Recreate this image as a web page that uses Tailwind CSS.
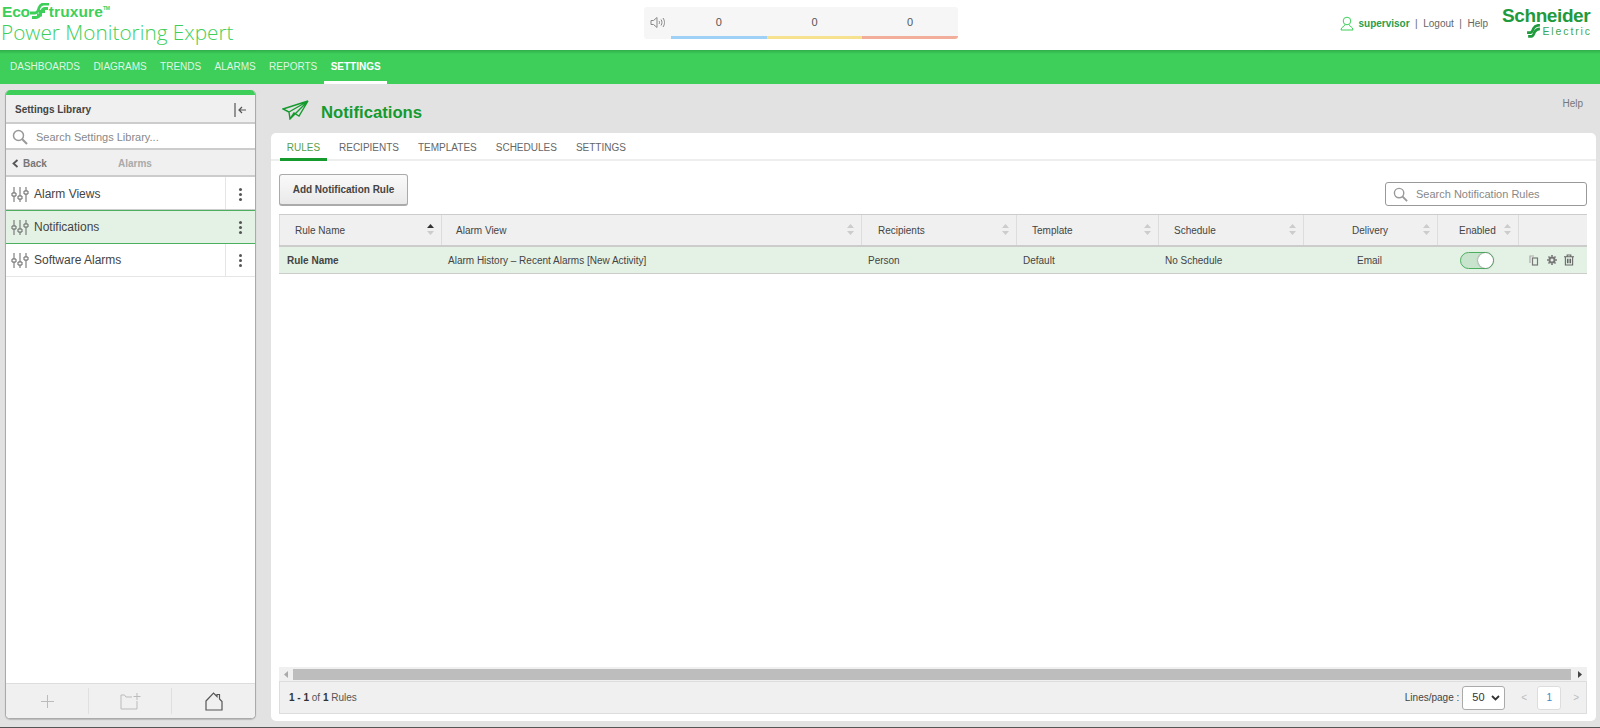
<!DOCTYPE html>
<html lang="en">
<head>
  <meta charset="UTF-8">
  <title>Power Monitoring Expert - Notifications</title>
  <script src="https://cdn.jsdelivr.net/npm/@tailwindcss/browser@4"></script>
</head>
<body class="bg-[#e2e2e2] h-[728px] w-[1600px] overflow-hidden flex flex-col font-['Liberation_Sans',Arial,sans-serif] text-[10px] text-[#444]">

  <!-- top bar -->
  <header class="h-[50px] shrink-0 bg-white grid grid-cols-[644px_314px_1fr]">
    <div class="pl-[2px] pt-[2px]">
      <div class="flex items-center h-[20px] text-[#3ecf5a] text-[15.500px] font-bold leading-none tracking-[-0.2px]">
        <span>Eco</span>
        <svg class="w-[21px] h-[18px] -mr-[2px]" viewBox="0 0 21 18" fill="none" stroke="#3ecf5a" stroke-width="2.800"><path d="M0 10h5c3 0 3-2 4-5s3-4 5-4h5"/><path d="M2 14.500h4c3 0 4-2 5-5s2-4 4-4h3"/><path d="M9 8.500h6M7 12h5"/></svg>
        <span class="tracking-[0.1px]">truxure</span><span class="text-[5px] self-start mt-[4px]">TM</span>
      </div>
      <div class="-ml-[1px] text-[#3ecf5a] text-[20.800px] leading-[21px] font-['Open_Sans',sans-serif] font-[350] whitespace-nowrap">Power Monitoring Expert</div>
    </div>

    <div class="mt-[7px] h-[32px] bg-[#f6f6f6] rounded-[3px] flex">
      <div class="w-[27px] flex items-center justify-center pb-[2px]">
        <svg class="w-[15px] h-[13px]" viewBox="0 0 15 13" fill="none" stroke="#888" stroke-width="1"><path d="M1 4.500h2.500L7 1.500v10L3.500 8.500H1z"/><path d="M9 5c.7 1 .7 2 0 3M11 3.500c1.300 2 1.300 4 0 6M13 2c2 3 2 6 0 9"/></svg>
      </div>
      <div class="flex-1 grid grid-cols-3 text-center text-[11px] text-[#555]">
        <div class="border-b-[3px] border-[#9fd0f5] pt-[7px]">0</div>
        <div class="border-b-[3px] border-[#f6e28e] pt-[7px]">0</div>
        <div class="border-b-[3px] border-[#f2ae9a] pt-[7px] rounded-br-[3px]">0</div>
      </div>
    </div>

    <div class="flex justify-end items-start pr-[8px]">
      <div class="flex items-center mt-[16px] gap-[5.500px] text-[#666]">
        <svg class="w-[14px] h-[15px] -mr-[1px]" viewBox="0 0 14 15" fill="none" stroke="#3ecf5a" stroke-width="1"><circle cx="7" cy="5" r="3.800"/><path d="M5 8.500c0 2-4 2-4 5.500h12c0-3.500-4-3.500-4-5.500"/></svg>
        <span class="font-bold text-[#2a9d4a]">supervisor</span>
        <span>|</span><span>Logout</span><span>|</span><span>Help</span>
      </div>
      <div class="ml-[14px] mt-[6px] w-[90px] text-[#1f9a3c] leading-none">
        <div class="text-[19px] font-bold tracking-[-0.4px]">Schneider</div>
        <div class="flex items-center justify-end gap-[1px] -mt-[1px] text-[10.500px] tracking-[1.900px] text-[#3aa655]">
          <svg class="w-[15px] h-[14px]" viewBox="0 0 14 13" fill="none" stroke="#1f9a3c" stroke-width="2.400"><path d="M1 8h3c2 0 2-2 3-4s2-3 6-3"/><path d="M2 11.500h3c2 0 2-2 3-4s2-3 5-3"/></svg>
          <span>Electric</span>
        </div>
      </div>
    </div>
  </header>

  <!-- main nav -->
  <nav class="h-[34px] shrink-0 bg-[#3ecf5a] bg-gradient-to-b from-[#2fae4a] to-[#3ecf5a] to-[12%] flex pl-[3.300px] text-[#dff6e4]">
    <a class="px-[6.700px] pt-[9px]">DASHBOARDS</a>
    <a class="px-[6.700px] pt-[9px]">DIAGRAMS</a>
    <a class="px-[6.700px] pt-[9px]">TRENDS</a>
    <a class="px-[6.700px] pt-[9px]">ALARMS</a>
    <a class="px-[6.700px] pt-[9px]">REPORTS</a>
    <a class="pl-[6.700px] pt-[9px] w-[63px] font-bold text-white border-b-[3px] border-white">SETTINGS</a>
  </nav>

  <div class="flex-1 flex min-h-0 pl-[5px]">
    <!-- settings library -->
    <aside class="mt-[6px] mb-[8px] w-[251px] shrink-0 bg-white border border-[#aaa] border-t-0 rounded-[5px] flex flex-col overflow-hidden shadow-[0_1px_1px_#bbb]">
      <div class="h-[5px] shrink-0 bg-[#3ecf5a] -mx-px"></div>
      <div class="h-[29px] shrink-0 bg-[#f0f0f0] border-b-2 border-[#ccc] flex items-center justify-between pt-[2px] pl-[9px] pr-[8px] font-bold text-[#444]">
        <span>Settings Library</span>
        <svg class="w-[13px] h-[16px]" viewBox="0 0 13 16" fill="none" stroke="#555"><path d="M1 1v14" stroke-width="1.200"/><path d="M12 8H5M8 5 5 8l3 3" stroke-width="1.200"/></svg>
      </div>
      <div class="h-[26px] shrink-0 border-b-2 border-[#ccc] flex items-center pt-[2px] pl-[6px] text-[#888] text-[11px]">
        <svg class="w-[16px] h-[16px] mr-[8px]" viewBox="0 0 16 16" fill="none" stroke="#999" stroke-width="1.500"><circle cx="6.500" cy="6.500" r="5"/><path d="m10 10 5 5" stroke-width="2"/></svg>
        <span>Search Settings Library...</span>
      </div>
      <div class="h-[27px] shrink-0 bg-[#f0f0f0] border-b-2 border-[#ccc] flex items-center pt-[1px] pl-[6px] font-bold">
        <svg class="w-[7px] h-[9px] mr-[4px]" viewBox="0 0 7 9" fill="none" stroke="#555" stroke-width="1.800"><path d="M5.500 1 1.500 4.500l4 3.500"/></svg>
        <span class="text-[#777] w-[95px]">Back</span>
        <span class="text-[#aaa]">Alarms</span>
      </div>

      <div class="h-[34px] shrink-0 border-b-2 border-[#ccc] flex items-center text-[12px] pl-[5px]">
        <svg class="w-[18px] h-[17px] mr-[5px] mt-[2px]" viewBox="0 0 18 17" fill="none" stroke="#666"><path d="M3 1v15M9 1v15M15 1v15"/><path fill="#fff" d="M1 7h4v3H1zM7 10h4v3H7zM13 5h4v3h-4z"/></svg>
        <span class="flex-1 mt-[2px]">Alarm Views</span>
        <div class="w-[30px] h-full border-l border-[#e6e6e6] flex flex-col items-center justify-center gap-[2px] pt-[2px]"><i class="w-[3px] h-[3px] rounded-full bg-[#555]"></i><i class="w-[3px] h-[3px] rounded-full bg-[#555]"></i><i class="w-[3px] h-[3px] rounded-full bg-[#555]"></i></div>
      </div>
      <div class="h-[34px] shrink-0 bg-[#e4f2e6] border-y border-[#4caf5f] -mt-px flex items-center text-[12px] pl-[5px]">
        <svg class="w-[18px] h-[17px] mr-[5px]" viewBox="0 0 18 17" fill="none" stroke="#666"><path d="M3 1v15M9 1v15M15 1v15"/><path fill="#e4f2e6" d="M1 7h4v3H1zM7 10h4v3H7zM13 5h4v3h-4z"/></svg>
        <span class="flex-1">Notifications</span>
        <div class="w-[30px] h-full flex flex-col items-center justify-center gap-[2px]"><i class="w-[3px] h-[3px] rounded-full bg-[#555]"></i><i class="w-[3px] h-[3px] rounded-full bg-[#555]"></i><i class="w-[3px] h-[3px] rounded-full bg-[#555]"></i></div>
      </div>
      <div class="h-[33px] shrink-0 border-b border-[#e6e6e6] flex items-center text-[12px] pl-[5px]">
        <svg class="w-[18px] h-[17px] mr-[5px]" viewBox="0 0 18 17" fill="none" stroke="#666"><path d="M3 1v15M9 1v15M15 1v15"/><path fill="#fff" d="M1 7h4v3H1zM7 10h4v3H7zM13 5h4v3h-4z"/></svg>
        <span class="flex-1">Software Alarms</span>
        <div class="w-[30px] h-full border-l border-[#e6e6e6] flex flex-col items-center justify-center gap-[2px]"><i class="w-[3px] h-[3px] rounded-full bg-[#555]"></i><i class="w-[3px] h-[3px] rounded-full bg-[#555]"></i><i class="w-[3px] h-[3px] rounded-full bg-[#555]"></i></div>
      </div>

      <div class="flex-1"></div>

      <div class="h-[35px] shrink-0 bg-[#f0f0f0] border-t border-[#ddd] grid grid-cols-3 items-center">
        <div class="h-[26px] border-r border-[#e0e0e0] flex items-center justify-center pt-[1px]">
          <svg class="w-[13px] h-[13px]" viewBox="0 0 13 13" stroke="#bbb"><path d="M6.500 0v13M0 6.500h13"/></svg>
        </div>
        <div class="h-[26px] border-r border-[#e0e0e0] flex items-center justify-center">
          <svg class="w-[21px] h-[17px]" viewBox="0 0 21 17" fill="none" stroke="#bbb"><path d="M12 4H6L4.500 2H1v14h16v-8M17 0v7M13.500 3.500h7"/></svg>
        </div>
        <div class="h-[26px] flex items-center justify-center">
          <svg class="w-[18px] h-[19px]" viewBox="0 0 18 19" fill="none" stroke="#555" stroke-width="1.200"><path d="M1 9 8.500 1l3.500 3.500V2.500h2.500V7L17 9.500V18H1z"/></svg>
        </div>
      </div>
    </aside>

    <!-- content -->
    <main class="flex-1 min-w-0 flex flex-col pl-[15px] pr-[4px] pb-[6px]">
      <div class="h-[49px] shrink-0 flex items-start relative">
        <svg class="w-[27px] h-[20px] ml-[11px] mt-[16px]" viewBox="0 0 27 20" fill="none" stroke="#159a2e" stroke-width="1.400"><path d="M1 9 26 1 8 19l-1-7zM7 12 26 1M8 19l4-6 5 3L26 1"/></svg>
        <h1 class="ml-[12px] mt-[19px] text-[16.700px] leading-[20px] font-bold text-[#159a2e]">Notifications</h1>
        <span class="absolute right-[13px] top-[12px] text-[#777]">Help</span>
      </div>

      <section class="flex-1 min-h-0 bg-white rounded-[5px] flex flex-col pb-[7px]">
        <div class="h-[28px] shrink-0 flex pl-[9px] border-b-2 border-[#eee] text-[#666]">
          <a class="w-[47px] h-[28px] pt-[7px] text-center text-[#5aa04c] border-b-[3px] border-[#159a2e]">RULES</a>
          <a class="ml-[12px] pt-[7px]">RECIPIENTS</a>
          <a class="ml-[19px] pt-[7px]">TEMPLATES</a>
          <a class="ml-[19px] pt-[7px]">SCHEDULES</a>
          <a class="ml-[19px] pt-[7px]">SETTINGS</a>
        </div>

        <div class="h-[53px] shrink-0 flex justify-between pl-[8px] pr-[9px]">
          <button class="mt-[13px] w-[129px] h-[32px] rounded-[3px] border border-[#aaa] border-b-2 bg-gradient-to-b from-[#fafafa] to-[#e9e9e9] font-bold text-[#444]">Add Notification Rule</button>
          <div class="mt-[21px] w-[202px] h-[24px] border border-[#999] rounded-[3px] flex items-center pl-[7px] text-[#888] text-[11px]">
            <svg class="w-[15px] h-[15px] mr-[8px]" viewBox="0 0 16 16" fill="none" stroke="#999" stroke-width="1.500"><circle cx="6.500" cy="6.500" r="5"/><path d="m10 10 5 5" stroke-width="2"/></svg>
            <span>Search Notification Rules</span>
          </div>
        </div>

        <div class="ml-[8px] mr-[9px] flex-1 min-h-0 flex flex-col">
          <div class="h-[33px] shrink-0 grid grid-cols-[163px_420px_155px_142px_145px_134px_81px_68px] bg-[#f0f0f0] border-t border-b-2 border-[#ccc] items-stretch">
            <div class="relative pl-[15px] pt-[8px] border-x border-[#ddd]">Rule Name
              <svg class="absolute right-[7px] top-[9px] w-[7px] h-[11px]" viewBox="0 0 7 11"><path d="M3.500 0 7 4H0z" fill="#333"/><path d="M3.500 11 7 7H0z" fill="#ccc"/></svg></div>
            <div class="relative pl-[14px] pt-[8px] border-r border-[#ddd]">Alarm View
              <svg class="absolute right-[7px] top-[9px] w-[7px] h-[11px]" viewBox="0 0 7 11"><path d="M3.500 0 7 4H0z" fill="#ccc"/><path d="M3.500 11 7 7H0z" fill="#ccc"/></svg></div>
            <div class="relative pl-[16px] pt-[8px] border-r border-[#ddd]">Recipients
              <svg class="absolute right-[7px] top-[9px] w-[7px] h-[11px]" viewBox="0 0 7 11"><path d="M3.500 0 7 4H0z" fill="#ccc"/><path d="M3.500 11 7 7H0z" fill="#ccc"/></svg></div>
            <div class="relative pl-[15px] pt-[8px] border-r border-[#ddd]">Template
              <svg class="absolute right-[7px] top-[9px] w-[7px] h-[11px]" viewBox="0 0 7 11"><path d="M3.500 0 7 4H0z" fill="#ccc"/><path d="M3.500 11 7 7H0z" fill="#ccc"/></svg></div>
            <div class="relative pl-[15px] pt-[8px] border-r border-[#ddd]">Schedule
              <svg class="absolute right-[7px] top-[9px] w-[7px] h-[11px]" viewBox="0 0 7 11"><path d="M3.500 0 7 4H0z" fill="#ccc"/><path d="M3.500 11 7 7H0z" fill="#ccc"/></svg></div>
            <div class="relative pl-[48px] pt-[8px] border-r border-[#ddd]">Delivery
              <svg class="absolute right-[7px] top-[9px] w-[7px] h-[11px]" viewBox="0 0 7 11"><path d="M3.500 0 7 4H0z" fill="#ccc"/><path d="M3.500 11 7 7H0z" fill="#ccc"/></svg></div>
            <div class="relative pl-[21px] pt-[8px] border-r border-[#ddd]">Enabled
              <svg class="absolute right-[7px] top-[9px] w-[7px] h-[11px]" viewBox="0 0 7 11"><path d="M3.500 0 7 4H0z" fill="#ccc"/><path d="M3.500 11 7 7H0z" fill="#ccc"/></svg></div>
            <div></div>
          </div>

          <div class="h-[27px] shrink-0 grid grid-cols-[163px_420px_155px_142px_145px_134px_81px_68px] bg-[#e4f2e6] border-b border-[#ccc] items-center">
            <div class="pl-[8px] font-bold">Rule Name</div>
            <div class="pl-[6px]">Alarm History – Recent Alarms [New Activity]</div>
            <div class="pl-[6px]">Person</div>
            <div class="pl-[6px]">Default</div>
            <div class="pl-[6px]">No Schedule</div>
            <div class="pl-[53px]">Email</div>
            <div class="pl-[22px]">
              <div class="w-[34px] h-[17px] rounded-full border border-[#4caf5f] bg-[#c9e4cd] flex justify-end">
                <i class="w-[15px] h-[15px] rounded-full bg-white shadow-[0_0_2px_#666]"></i>
              </div>
            </div>
            <div class="flex items-center pl-[10px] gap-[8px]">
              <svg class="w-[10px] h-[11px]" viewBox="0 0 10 11" fill="none" stroke="#777" stroke-width="1.200"><path d="M1 8V1h4" stroke="#aaa"/><rect x="3.500" y="3" width="5" height="7"/></svg>
              <svg class="w-[10px] h-[10px]" viewBox="0 0 11 11" fill="none" stroke="#777"><circle cx="5.500" cy="5.500" r="2.800" stroke-width="2.200"/><path d="M5.500 0v2M5.500 9v2M0 5.500h2M9 5.500h2M1.600 1.600 3 3M8 8l1.400 1.400M1.600 9.400 3 8M8 3l1.400-1.400" stroke-width="1.800"/></svg>
              <svg class="w-[10px] h-[12px] -ml-px" viewBox="0 0 11 12" fill="none" stroke="#666" stroke-width="1.200"><path d="M0 2.500h11M3.500 2.500V.5h4v2M1.500 2.500v9h8v-9M3.800 4.500v5M5.500 4.500v5M7.200 4.500v5"/></svg>
            </div>
          </div>

          <div class="flex-1"></div>

          <div class="h-[14px] shrink-0 bg-[#f0f0f0] flex items-center">
            <svg class="w-[14px] h-[7px]" viewBox="0 0 14 7"><path d="M5 3.500 9 0v7z" fill="#aaa"/></svg>
            <div class="flex-1 h-[11px] mr-[2px] bg-[#bdbdbd]"></div>
            <svg class="w-[14px] h-[7px]" viewBox="0 0 14 7"><path d="M9 3.500 5 0v7z" fill="#444"/></svg>
          </div>

          <div class="h-[33px] shrink-0 bg-[#f0f0f0] border border-[#ddd] flex items-center pl-[9px] pr-[7px]">
            <span class="flex-1 text-[#555]"><b class="text-[#333]">1 - 1</b> of <b class="text-[#333]">1</b> Rules</span>
            <span class="mr-[3px]">Lines/page :</span>
            <div class="w-[43px] h-[24px] bg-white border border-[#aaa] rounded-[3px] flex items-center justify-between pl-[9px] pr-[4px] text-[11px] text-[#333]">
              <span>50</span>
              <svg class="w-[9px] h-[6px]" viewBox="0 0 9 6" fill="none" stroke="#333" stroke-width="1.800"><path d="m1 1 3.500 3.500L8 1"/></svg>
            </div>
            <span class="ml-[16px] text-[#bbb]">&lt;</span>
            <span class="ml-[10px] w-[24px] h-[24px] bg-white border border-[#ddd] rounded-[3px] flex items-center justify-center text-[#3a87c8]">1</span>
            <span class="ml-[12px] text-[#bbb]">&gt;</span>
          </div>
        </div>
      </section>
    </main>
  </div>
  <div class="h-px shrink-0 bg-[#555]"></div>
</body>
</html>
